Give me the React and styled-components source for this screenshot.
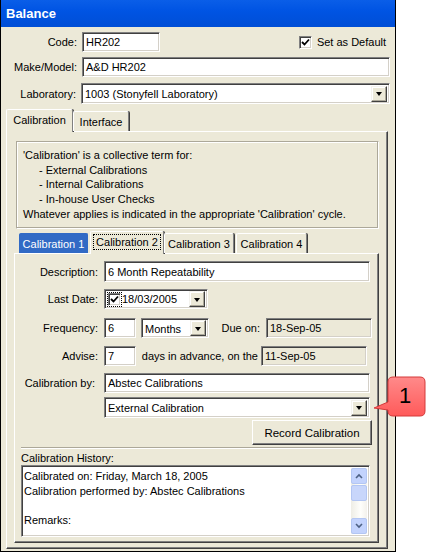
import React from 'react';
import styled, { createGlobalStyle } from 'styled-components';

const Global = createGlobalStyle`
  html, body { margin: 0; padding: 0; background: #fff; }
  body { font-family: "Liberation Sans", Arial, sans-serif; font-size: 11px; color: #000; }
  * { box-sizing: border-box; }
`;

const Page = styled.div`
  position: relative;
  width: 427px;
  height: 557px;
  overflow: hidden;
  background: #fff;
`;

const Window = styled.div`
  width: 396px;
  height: 552px;
  border: 1px solid #000;
  border-top: none;
  background: #ece9d8;
  display: flex;
  flex-direction: column;
`;

const TitleBar = styled.div`
  height: 27px;
  flex: none;
  background: linear-gradient(#0a5ee8, #0054e3 40%, #004ed6);
  color: #fff;
  font-weight: bold;
  font-size: 13px;
  display: flex;
  align-items: center;
  padding-left: 5px;
  padding-bottom: 1px;
`;

const Body = styled.div`
  flex: 1;
  display: flex;
  flex-direction: column;
  padding: 0 5px 2px 4px;
`;

const Row = styled.div`
  display: flex;
  align-items: center;
  margin-top: ${p => p.$mt || 0}px;
  height: ${p => p.$h || 20}px;
`;

const Label = styled.div`
  width: ${p => p.$w}px;
  flex: none;
  text-align: right;
  padding-right: ${p => p.$pr || 0}px;
  white-space: nowrap;
`;

const Sunken = styled.div`
  flex: none;
  width: ${p => p.$w}px;
  height: ${p => p.$h || 20}px;
  margin-left: ${p => p.$ml || 0}px;
  background: ${p => (p.$ro ? '#ece9d8' : '#fff')};
  border: 1px solid;
  border-color: #808080 #fff #fff #808080;
  box-shadow: inset 1px 1px 0 #404040, inset -1px -1px 0 #d4d0c8;
  display: flex;
  align-items: center;
  padding: 0 2px 0 3px;
  white-space: nowrap;
  overflow: hidden;
  position: relative;
`;

const FieldText = styled.span`
  flex: 1;
  padding-top: ${p => p.$pt || 0}px;
  margin-left: ${p => p.$ml || 0}px;
`;

const DropBtn = styled.div`
  width: 16px;
  height: 16px;
  flex: none;
  background: #ece9d8;
  border: 1px solid;
  border-color: #f4f3ee #404040 #404040 #f4f3ee;
  box-shadow: inset -1px -1px 0 #aca899, inset 1px 1px 0 #fff;
  display: flex;
  align-items: center;
  justify-content: center;
  &::after {
    content: '';
    border-left: 3.5px solid transparent;
    border-right: 3.5px solid transparent;
    border-top: 4px solid #000;
    margin-top: 1px;
  }
`;

const Check = styled.div`
  width: 13px;
  height: 13px;
  flex: none;
  background: #fff;
  border: 1px solid;
  border-color: #808080 #fff #fff #808080;
  box-shadow: inset 1px 1px 0 #404040, inset -1px -1px 0 #d4d0c8;
  display: flex;
  align-items: center;
  justify-content: center;
  outline: ${p => (p.$focus ? '1px dotted #000' : 'none')};
  outline-offset: 0px;
`;

const CheckMark = () => (
  <svg width="9" height="9" viewBox="0 0 9 9">
    <path d="M1 4 L3.5 6.5 L8 1.5" stroke="#000" strokeWidth="1.8" fill="none" />
  </svg>
);

const CheckLabel = styled.span`
  margin-left: 5px;
  margin-right: 4px;
  white-space: nowrap;
`;

const Spacer = styled.div`
  flex: 1;
`;

const TabStrip = styled.div`
  display: flex;
  align-items: flex-end;
  height: ${p => p.$h}px;
  margin-top: ${p => p.$mt || 0}px;
  padding-left: ${p => p.$pl || 0}px;
  flex: none;
  position: relative;
  z-index: 1;
`;

const Tab = styled.div`
  width: ${p => p.$w}px;
  height: ${p => (p.$active ? 23 : 20)}px;
  margin-right: ${p => p.$mr || 0}px;
  background: ${p => (p.$hl ? '#316ac5' : '#ece9d8')};
  color: ${p => (p.$hl ? '#fff' : '#000')};
  border-top: 1px solid ${p => (p.$hl ? '#316ac5' : '#fff')};
  border-left: 1px solid ${p => (p.$hl ? '#316ac5' : '#fff')};
  border-right: 1px solid ${p => (p.$hl ? '#316ac5' : '#808080')};
  box-shadow: ${p => (p.$hl ? 'none' : '1px 0 0 #404040')};
  border-radius: 2px 2px 0 0;
  display: flex;
  align-items: center;
  justify-content: center;
  white-space: nowrap;
  margin-bottom: ${p => (p.$active ? -1 : 0)}px;
  padding-bottom: ${p => (p.$active ? 3 : 0)}px;
`;

const Focus = styled.span`
  outline: 1px dotted #000;
  outline-offset: 1px;
  padding: 0 1px;
`;

const Panel = styled.div`
  flex: ${p => (p.$grow ? 1 : 'none')};
  border: 1px solid;
  border-color: #fff #404040 #404040 #fff;
  box-shadow: inset -1px -1px 0 #808080;
  display: flex;
  flex-direction: column;
  padding: ${p => p.$pad};
  margin: ${p => p.$m || 0};
`;

const Group = styled.div`
  height: 88px;
  flex: none;
  border: 1px solid;
  border-color: #aca899 #fff #fff #aca899;
  box-shadow: inset -1px -1px 0 #aca899, inset 1px 1px 0 #fff;
  padding: 6px 6px 0 6px;
  line-height: 14.7px;
`;

const Indent = styled.div`
  padding-left: 16px;
`;

const Button = styled.div`
  width: 120px;
  height: 25px;
  margin-left: 237px;
  margin-top: 2px;
  flex: none;
  background: #ece9d8;
  border: 1px solid;
  border-color: #fff #404040 #404040 #fff;
  box-shadow: inset -1px -1px 0 #808080;
  display: flex;
  align-items: center;
  justify-content: center;
  font-size: 11.5px;
`;

const Separator = styled.div`
  height: 2px;
  margin: 2px 0 0 6px;
  width: 349px;
  border-top: 1px solid #aca899;
  border-bottom: 1px solid #fff;
`;

const HistLabel = styled.div`
  margin: 2px 0 0 6px;
  height: 14px;
  line-height: 14px;
`;

const TextArea = styled.div`
  width: 349px;
  height: 72px;
  margin: 0 0 0 6px;
  background: #fff;
  border: 1px solid;
  border-color: #808080 #fff #fff #808080;
  box-shadow: inset 1px 1px 0 #404040, inset -1px -1px 0 #d4d0c8;
  display: flex;
  padding: 2px;
`;

const TextLines = styled.div`
  flex: 1;
  line-height: 14.7px;
  padding-top: 1px;
`;

const Scroll = styled.div`
  width: 16px;
  flex: none;
  display: flex;
  flex-direction: column;
  background: linear-gradient(90deg, #eeede5, #fefefb 60%, #f3f1ec);
`;

const ScrollBtn = styled.div`
  height: 16px;
  flex: none;
  margin-top: ${p => p.$mt || 0}px;
  background: ${p => (p.$arrow ? '#c3d3fd' : '#c8d6fb')};
  border: 1px solid #b3c6f3;
  border-radius: 2px;
  display: flex;
  align-items: center;
  justify-content: center;
`;

const Chevron = ({ up }) => (
  <svg width="8" height="6" viewBox="0 0 8 6">
    <path d={up ? 'M1 5 L4 2 L7 5' : 'M1 1 L4 4 L7 1'} stroke="#4d6185" strokeWidth="1.6" fill="none" />
  </svg>
);

const Callout = styled.div`
  position: absolute;
  left: 373px;
  top: 376px;
  width: 54px;
  height: 42px;
`;

const CalloutNum = styled.span`
  position: absolute;
  left: 26px;
  top: 7px;
  font-size: 22px;
  color: #000;
  font-family: "Liberation Sans", Arial, sans-serif;
`;

export default function App() {
  return (
    <Page>
      <Global />
      <Window>
        <TitleBar>Balance</TitleBar>
        <Body>
          <Row $mt={5} $h={20}>
            <Label $w={72}>Code:</Label>
            <Sunken $w={78} $ml={5}>HR202</Sunken>
            <Spacer />
            <Check><CheckMark /></Check>
            <CheckLabel>Set as Default</CheckLabel>
          </Row>
          <Row $mt={5} $h={20}>
            <Label $w={72}>Make/Model:</Label>
            <Sunken $w={308} $ml={5}>A&amp;D HR202</Sunken>
          </Row>
          <Row $mt={6} $h={21}>
            <Label $w={71}>Laboratory:</Label>
            <Sunken $w={309} $h={21} $ml={5}>
              <FieldText>1003 (Stonyfell Laboratory)</FieldText>
              <DropBtn />
            </Sunken>
          </Row>
          <TabStrip $h={23} $mt={4} $pl={1}>
            <Tab $w={67} $active>Calibration</Tab>
            <Tab $w={56}>Interface</Tab>
          </TabStrip>
          <Panel $grow $pad="9px 8px 5px 9px" $m="0 2px 0 1px">
            <Group>
              <div>'Calibration' is a collective term for:</div>
              <Indent>- External Calibrations</Indent>
              <Indent>- Internal Calibrations</Indent>
              <Indent>- In-house User Checks</Indent>
              <div>Whatever applies is indicated in the appropriate 'Calibration' cycle.</div>
            </Group>
            <TabStrip $h={24} $mt={0} $pl={3}>
              <Tab $w={69} $mr={2} $hl>Calibration 1</Tab>
              <Tab $w={74} $active><Focus>Calibration 2</Focus></Tab>
              <Tab $w={70} $mr={2}>Calibration 3</Tab>
              <Tab $w={71}>Calibration 4</Tab>
            </TabStrip>
            <Panel $grow $pad="7px 0 0 0" $m="0 0 0 -2px">
              <Row $h={21}>
                <Label $w={83}>Description:</Label>
                <Sunken $w={266} $h={21} $ml={6}>6 Month Repeatability</Sunken>
              </Row>
              <Row $mt={7} $h={20}>
                <Label $w={83}>Last Date:</Label>
                <Sunken $w={104} $ml={6}>
                  <Check $focus><CheckMark /></Check>
                  <FieldText $ml={1}>18/03/2005</FieldText>
                  <DropBtn />
                </Sunken>
              </Row>
              <Row $mt={9} $h={20}>
                <Label $w={83}>Frequency:</Label>
                <Sunken $w={32} $ml={6}>6</Sunken>
                <Sunken $w={68} $ml={5}>
                  <FieldText $pt={1}>Months</FieldText>
                  <DropBtn />
                </Sunken>
                <Label $w={57} $pr={6}>Due on:</Label>
                <Sunken $w={106} $ro>18-Sep-05</Sunken>
              </Row>
              <Row $mt={8} $h={20}>
                <Label $w={83}>Advise:</Label>
                <Sunken $w={32} $ml={6}>7</Sunken>
                <Label $w={125} $pr={3}>days in advance, on the</Label>
                <Sunken $w={106} $ro>11-Sep-05</Sunken>
              </Row>
              <Row $mt={7} $h={20}>
                <Label $w={80}>Calibration by:</Label>
                <Sunken $w={266} $ml={9}>Abstec Calibrations</Sunken>
              </Row>
              <Row $mt={4} $h={21}>
                <Label $w={83} />
                <Sunken $w={266} $h={21} $ml={6}>
                  <FieldText>External Calibration</FieldText>
                  <DropBtn />
                </Sunken>
              </Row>
              <Button>Record Calibration</Button>
              <Separator />
              <HistLabel>Calibration History:</HistLabel>
              <TextArea>
                <TextLines>
                  <div>Calibrated on: Friday, March 18, 2005</div>
                  <div>Calibration performed by: Abstec Calibrations</div>
                  <div>&nbsp;</div>
                  <div>Remarks:</div>
                </TextLines>
                <Scroll>
                  <ScrollBtn $arrow><Chevron up /></ScrollBtn>
                  <ScrollBtn $mt={1} />
                  <Spacer />
                  <ScrollBtn $arrow><Chevron /></ScrollBtn>
                </Scroll>
              </TextArea>
            </Panel>
          </Panel>
        </Body>
      </Window>
      <Callout>
        <svg width="54" height="42" viewBox="0 0 54 42">
          <defs>
            <linearGradient id="cg" x1="0" y1="0" x2="0" y2="1">
              <stop offset="0" stopColor="#ff8a8a" />
              <stop offset="1" stopColor="#ff5a5a" />
            </linearGradient>
          </defs>
          <path
            d="M20 1 H47 Q52 1 52 6 V35 Q52 40 47 40 H20 Q15 40 15 35 V34 L1 32 L15 26 V6 Q15 1 20 1 Z"
            fill="url(#cg)"
            stroke="#d43a3a"
            strokeWidth="1"
          />
        </svg>
        <CalloutNum>1</CalloutNum>
      </Callout>
    </Page>
  );
}
